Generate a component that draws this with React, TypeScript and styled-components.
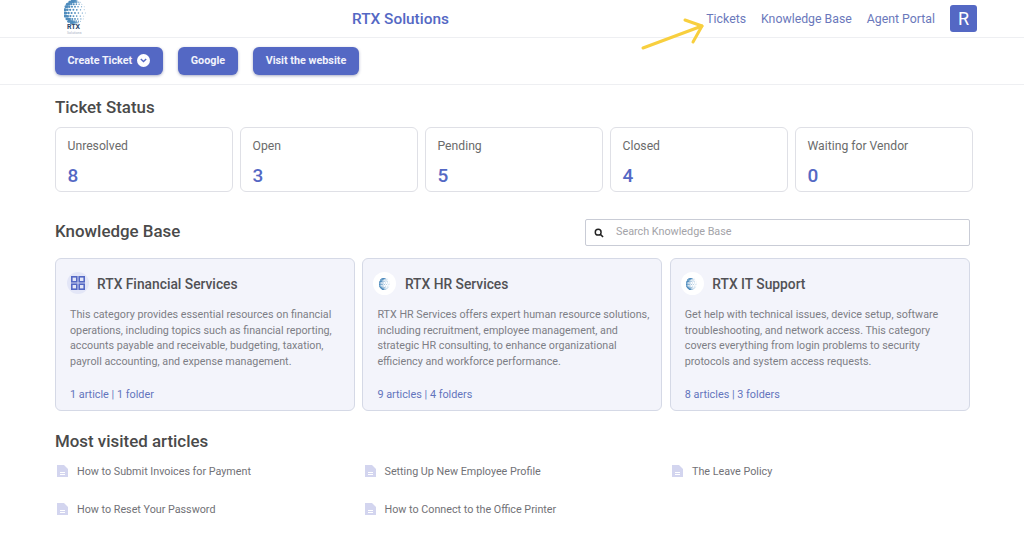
import React from "react";
import styled, { createGlobalStyle } from "styled-components";

const PRIMARY = "#5468c4";

const GlobalStyle = createGlobalStyle`
	html, body {
		margin: 0;
		padding: 0;
		background: #fff;
		font-family: Roboto, "Liberation Sans", sans-serif;
	}
	* {
		box-sizing: border-box;
	}
`;

const statuses = [
	{ label: "Unresolved", count: 8 },
	{ label: "Open", count: 3 },
	{ label: "Pending", count: 5 },
	{ label: "Closed", count: 4 },
	{ label: "Waiting for Vendor", count: 0 },
];

const categories = [
	{
		title: "RTX Financial Services",
		text: "This category provides essential resources on financial operations, including topics such as financial reporting, accounts payable and receivable, budgeting, taxation, payroll accounting, and expense management.",
		meta: "1 article | 1 folder",
		grid: true,
	},
	{
		title: "RTX HR Services",
		text: "RTX HR Services offers expert human resource solutions, including recruitment, employee management, and strategic HR consulting, to enhance organizational efficiency and workforce performance.",
		meta: "9 articles | 4 folders",
	},
	{
		title: "RTX IT Support",
		text: "Get help with technical issues, device setup, software troubleshooting, and network access. This category covers everything from login problems to security protocols and system access requests.",
		meta: "8 articles | 3 folders",
	},
];

const articles = [
	"How to Submit Invoices for Payment",
	"Setting Up New Employee Profile",
	"The Leave Policy",
	"How to Reset Your Password",
	"How to Connect to the Office Printer",
];

// dots on a sphere: packed on the left limb, sparse and small to the right
const globeDots: number[][] = [];
for (let lat = -75; lat <= 75; lat += 16) {
	const row = Math.round((lat + 75) / 16);
	for (let lon = -85 + (row % 2) * 9; lon <= 80; lon += 19 + Math.max(0, lon) * 0.35) {
		const la = (lat * Math.PI) / 180;
		const lo = (lon * Math.PI) / 180;
		const x = 11 + 10.5 * Math.cos(la) * Math.sin(lo);
		const y = 12 + 11.5 * Math.sin(la);
		globeDots.push([x, y, Math.max(0.4, 1.5 - (lon + 85) * 0.007)]);
	}
}

const Globe = ({ size }: { size: number }) => (
	<svg width={size} height={size} viewBox="0 0 24 24">
		{globeDots.map(([cx, cy, r]) => (
			<circle key={`${cx}-${cy}`} cx={cx} cy={cy} r={r} fill="#4f8cbd" />
		))}
	</svg>
);

const GridIcon = () => (
	<svg width="16" height="16" viewBox="0 0 16 16" fill="none" stroke={PRIMARY} strokeWidth="1.6">
		<rect x="1.8" y="1.8" width="5" height="5" />
		<rect x="9.2" y="1.8" width="5" height="5" />
		<rect x="1.8" y="9.2" width="5" height="5" />
		<rect x="9.2" y="9.2" width="5" height="5" />
	</svg>
);

const DocIcon = () => (
	<svg width="11" height="12" viewBox="0 0 11 12">
		<path d="M0 0h7l4 4v8H0z" fill="#d3d5ef" />
		<path d="M3 7.5h5M3 9.5h5" stroke="#fff" strokeWidth="1" />
	</svg>
);

const SearchIcon = () => (
	<svg width="10" height="10" viewBox="0 0 11 11" fill="none" stroke="#222" strokeWidth="1.6">
		<circle cx="4.6" cy="4.6" r="3.2" />
		<path d="M7 7l3 3" />
	</svg>
);

const Chevron = () => (
	<svg width="7" height="5" viewBox="0 0 7 5" fill="none" stroke={PRIMARY} strokeWidth="1.4">
		<path d="M0.8 1l2.7 2.6L6.2 1" />
	</svg>
);

export default function App() {
	return (
		<Page>
			<GlobalStyle />
			<Header>
				<Logo>
					<Globe size={24} />
					<LogoText>RTX</LogoText>
					<LogoSub>Solutions</LogoSub>
				</Logo>
				<Brand>RTX Solutions</Brand>
				<Nav>
					<NavLink>Tickets</NavLink>
					<NavLink>Knowledge Base</NavLink>
					<NavLink>Agent Portal</NavLink>
					<Avatar>R</Avatar>
				</Nav>
			</Header>
			<Arrow width="64" height="34" viewBox="0 0 64 34" fill="none" stroke="#f8cf3e" strokeWidth="3" strokeLinecap="round" strokeLinejoin="round">
				<path d="M2 30L61 8" />
				<path d="M44 2L61 8L52 24" />
			</Arrow>
			<Toolbar>
				<ActionButton>
					Create Ticket
					<ChevronBadge>
						<Chevron />
					</ChevronBadge>
				</ActionButton>
				<ActionButton>Google</ActionButton>
				<ActionButton>Visit the website</ActionButton>
			</Toolbar>
			<Main>
				<StatusTitle>Ticket Status</StatusTitle>
				<StatusRow>
					{statuses.map((item) => (
						<StatusCard key={item.label}>
							<StatusLabel>{item.label}</StatusLabel>
							<StatusCount>{item.count}</StatusCount>
						</StatusCard>
					))}
				</StatusRow>
				<KbHead>
					<KbTitle>Knowledge Base</KbTitle>
					<SearchBox>
						<SearchIcon />
						<SearchText>Search Knowledge Base</SearchText>
					</SearchBox>
				</KbHead>
				<CategoryRow>
					{categories.map((item) => (
						<CategoryCard key={item.title}>
							<CategoryHead $grid={item.grid}>
								<CategoryIcon $grid={item.grid}>
									{item.grid ? <GridIcon /> : <Globe size={12} />}
								</CategoryIcon>
								<CategoryTitle>{item.title}</CategoryTitle>
							</CategoryHead>
							<CategoryText>{item.text}</CategoryText>
							<CategoryMeta>{item.meta}</CategoryMeta>
						</CategoryCard>
					))}
				</CategoryRow>
				<VisitedTitle>Most visited articles</VisitedTitle>
				<ArticleGrid>
					{articles.map((title) => (
						<ArticleItem key={title}>
							<DocIcon />
							<span>{title}</span>
						</ArticleItem>
					))}
				</ArticleGrid>
			</Main>
		</Page>
	);
}

const Page = styled.div`
	position: relative;
	width: 1024px;
	height: 559px;
	overflow: hidden;
	background: #fff;
`;

const Header = styled.header`
	display: grid;
	grid-template-columns: 297px auto 1fr;
	align-items: center;
	height: 38px;
	padding: 0 47px 0 55px;
	border-bottom: 1px solid #eeeff2;
`;

const Logo = styled.div`
	display: flex;
	flex-direction: column;
	align-items: flex-start;
	padding-left: 9px;
	height: 37px;
`;

const LogoText = styled.span`
	font-size: 7px;
	line-height: 7px;
	font-weight: 700;
	color: #29456b;
	margin-left: 3px;
`;

const LogoSub = styled.span`
	font-size: 3.5px;
	line-height: 4px;
	color: #a9b4c4;
	margin-left: 3px;
`;

const Brand = styled.div`
	font-size: 15.4px;
	font-weight: 500;
	color: ${PRIMARY};
`;

const Nav = styled.nav`
	display: flex;
	align-items: center;
	justify-content: flex-end;
	gap: 15px;
`;

const NavLink = styled.a`
	font-size: 12.3px;
	color: #6a78bb;
`;

const Avatar = styled.div`
	width: 27px;
	height: 27px;
	display: flex;
	align-items: center;
	justify-content: center;
	border-radius: 3px;
	background: ${PRIMARY};
	color: #fff;
	font-size: 18px;
`;

const Arrow = styled.svg`
	position: absolute;
	left: 641px;
	top: 18px;
`;

const Toolbar = styled.div`
	display: flex;
	align-items: center;
	gap: 15.5px;
	height: 47px;
	padding: 0 55px;
	border-bottom: 1px solid #eeeff2;
`;

const ActionButton = styled.button`
	display: flex;
	align-items: center;
	gap: 5px;
	height: 28px;
	padding: 0 12.5px 1px;
	border: none;
	border-radius: 6px;
	background: ${PRIMARY};
	box-shadow: 0 1px 3px rgba(40, 50, 110, 0.4);
	color: #f1f2fb;
	font-family: inherit;
	font-size: 10.8px;
	font-weight: 700;
`;

const ChevronBadge = styled.span`
	display: flex;
	align-items: center;
	justify-content: center;
	width: 13px;
	height: 13px;
	border-radius: 50%;
	background: #fff;
`;

const Main = styled.main`
	padding: 0 51px 0 55px;
`;

const SectionTitle = styled.h2`
	margin: 0;
	font-size: 16.9px;
	line-height: 22px;
	font-weight: 500;
	color: #4a4a4a;
`;

const StatusTitle = styled(SectionTitle)`
	padding-top: 11px;
`;

const StatusRow = styled.div`
	display: grid;
	grid-template-columns: repeat(5, 177.5px);
	column-gap: 7.5px;
	margin-top: 9px;
`;

const StatusCard = styled.div`
	height: 65px;
	padding: 11px 11.5px;
	background: #fff;
	border: 1px solid #dfe0e6;
	border-radius: 6px;
`;

const StatusLabel = styled.div`
	font-size: 12.2px;
	line-height: 15px;
	color: #6b6b6b;
`;

const StatusCount = styled.div`
	margin-top: 11px;
	font-size: 19px;
	line-height: 21px;
	font-weight: 500;
	color: ${PRIMARY};
`;

const KbHead = styled.div`
	display: flex;
	align-items: center;
	justify-content: space-between;
	margin-top: 27px;
	padding-right: 3px;
`;

const KbTitle = styled(SectionTitle)`
	padding-bottom: 4px;
`;

const SearchBox = styled.div`
	display: flex;
	align-items: center;
	gap: 12px;
	width: 385px;
	height: 27px;
	padding-left: 8px;
	background: #fff;
	border: 1px solid #c9ccd6;
	border-radius: 2px;
`;

const SearchText = styled.span`
	font-size: 10.8px;
	color: #a3a3a8;
	position: relative;
	top: -1px;
`;

const CategoryRow = styled.div`
	display: grid;
	grid-template-columns: repeat(3, 300px);
	column-gap: 7.4px;
	margin-top: 12px;
`;

const CategoryCard = styled.div`
	display: flex;
	flex-direction: column;
	height: 153px;
	padding: 13px 10px 8px 14px;
	background: #f3f4fb;
	border: 1px solid #d5d9e6;
	border-radius: 6px;
`;

const CategoryHead = styled.div<{ $grid?: boolean }>`
	display: flex;
	align-items: center;
	gap: ${(props) => (props.$grid ? "8px" : "8.5px")};
	height: 24px;
	margin-left: ${(props) => (props.$grid ? "-3px" : "-4px")};
`;

const CategoryIcon = styled.div<{ $grid?: boolean }>`
	display: flex;
	align-items: center;
	justify-content: center;
	align-self: flex-start;
	width: ${(props) => (props.$grid ? "22px" : "23px")};
	height: ${(props) => (props.$grid ? "22px" : "23px")};
	border-radius: 50%;
	background: ${(props) => (props.$grid ? "#e3e6f7" : "#fff")};
`;

const CategoryTitle = styled.div`
	font-size: 13.8px;
	font-weight: 500;
	color: #515155;
`;

const CategoryText = styled.p`
	margin: 11px 0 0;
	font-size: 10.74px;
	line-height: 15.5px;
	color: #7d7e85;
`;

const CategoryMeta = styled.div`
	margin-top: auto;
	font-size: 10.85px;
	line-height: 14px;
	color: #6374bd;
`;

const VisitedTitle = styled(SectionTitle)`
	margin-top: 19px;
`;

const ArticleGrid = styled.div`
	display: grid;
	grid-template-columns: repeat(3, 307.5px);
	row-gap: 22px;
	margin-top: 11px;
	padding-left: 2px;
`;

const ArticleItem = styled.div`
	display: flex;
	align-items: center;
	gap: 9px;
	height: 16px;
	font-size: 10.75px;
	color: #727277;
`;
